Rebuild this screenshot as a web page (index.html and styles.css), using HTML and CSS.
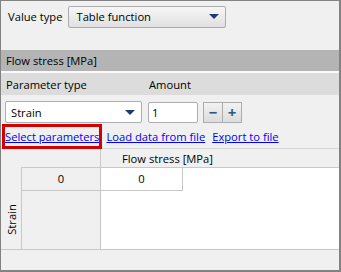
FILE: index.html
```html
<!DOCTYPE html>
<html lang="en">
<head>
    <meta charset="UTF-8">
    <title>Flow stress</title>
    <link rel="stylesheet" href="styles.css">
</head>
<body>
<div class="frame">
    <div class="top">
        <span class="lbl">Value type</span>
        <div class="combo combo-btn">
            <span>Table function</span>
            <span class="arrow"></span>
        </div>
    </div>

    <div class="section">Flow stress [MPa]</div>

    <div class="head-row">
        <span class="c1">Parameter type</span>
        <span class="c2">Amount</span>
    </div>

    <div class="ctrl-row">
        <div class="combo combo-white">
            <span>Strain</span>
            <span class="arrow"></span>
        </div>
        <div class="num">1</div>
        <div class="spin">
            <span class="sb">&minus;</span><span class="sb">+</span>
        </div>
    </div>

    <div class="links">
        <a href="#" class="link marked">Select parameters</a>
        <a href="#" class="link">Load data from file</a>
        <a href="#" class="link">Export to file</a>
    </div>

    <div class="table">
        <div class="corner"></div>
        <div class="colhead"><span>Flow stress [MPa]</span></div>
        <div class="strip"><span class="vtext">Strain</span></div>
        <div class="rowhead">0</div>
        <div class="cell">0</div>
        <div class="rest-top"></div>
        <div class="rowhead-empty"></div>
        <div class="data"></div>
    </div>
</div>
</body>
</html>
```

FILE: styles.css
```css
body {
    margin: 0;
    font-family: "Open Sans", "Noto Sans", sans-serif;
    font-size: 11.2px;
    color: #000;
}
.frame {
    width: 341px;
    height: 272px;
    box-sizing: border-box;
    border: 1px solid #828282;
    border-right-width: 2px;
    border-bottom-width: 2px;
    background: #f0f0f0;
    overflow: hidden;
}
.top {
    display: flex;
    align-items: center;
    gap: 6px;
    padding: 4px 0 0 7px;
    height: 45px;
}
.top .lbl {
    margin-top: -22px;
}
.combo {
    display: flex;
    align-items: center;
    justify-content: space-between;
    box-sizing: border-box;
    border: 1px solid #acacac;
    border-radius: 2px;
    padding: 0 6px 0 5px;
    height: 22px;
}
.top .combo {
    width: 158px;
    margin-top: -22px;
    padding-left: 7px;
}
.combo-btn {
    background: linear-gradient(#f6f6f6, #e0e0e0);
}
.combo-white {
    background: #fff;
    border-color: #abadb3;
    width: 137px;
}
.arrow {
    width: 0;
    height: 0;
    border-left: 5px solid transparent;
    border-right: 5px solid transparent;
    border-top: 5px solid #1e3a6e;
}
.section {
    height: 21px;
    line-height: 21px;
    background: #b4b4b4;
    padding-left: 5px;
    border-bottom: 2px solid #fafafa;
}
.head-row {
    display: flex;
    height: 22px;
    align-items: center;
    background: #dcdcdc;
}
.head-row .c1 {
    width: 143px;
    padding-left: 5px;
}
.ctrl-row {
    display: flex;
    align-items: center;
    gap: 6px;
    padding: 6px 0 0 4px;
}
.num {
    box-sizing: border-box;
    width: 50px;
    height: 21px;
    line-height: 19px;
    padding-left: 3px;
    background: #fff;
    border: 1px solid #abadb3;
    border-radius: 2px;
}
.spin {
    display: flex;
    margin-left: -1px;
}
.sb {
    box-sizing: border-box;
    width: 20px;
    height: 21px;
    line-height: 18px;
    text-align: center;
    font-weight: bold;
    font-size: 15px;
    color: #2c5a78;
    border: 1px solid #acacac;
    background: linear-gradient(#f2f2f2, #dcdcdc);
}
.sb + .sb {
    margin-left: -1px;
}
.links {
    display: flex;
    gap: 7px;
    padding: 2px 0 0 4px;
    height: 23px;
    align-items: center;
    border-bottom: 1px solid #d6d6d6;
}
.link {
    color: #0000ff;
    text-decoration: underline;
}
.marked {
    outline: 3px solid #d40000;
    outline-offset: 0;
    padding: 2px 0;
}
.table {
    display: grid;
    grid-template-columns: 20px 80px 82px 1fr;
    grid-template-rows: 19px 23px 1fr;
    height: 100px;
    border-bottom: 1px solid #c8c8c8;
}
.corner {
    grid-column: 1 / 3;
    border-right: 1px solid #c8c8c8;
}
.colhead {
    grid-column: 3 / 5;
    border-bottom: 1px solid #c8c8c8;
    padding-left: 21px;
    line-height: 19px;
}
.strip {
    grid-row: 2 / 4;
    display: flex;
    align-items: center;
    justify-content: center;
    padding-top: 22px;
}
.vtext {
    transform: rotate(-90deg);
    white-space: nowrap;
}
.rowhead {
    border: 1px solid #c8c8c8;
    margin-top: -1px;
    text-align: center;
    line-height: 22px;
}
.cell {
    background: #fff;
    border-right: 1px solid #c8c8c8;
    border-bottom: 1px solid #c8c8c8;
    text-align: center;
    line-height: 22px;
}
.rest-top {
    background: #fff;
}
.rowhead-empty {
    border-left: 1px solid #c8c8c8;
    border-right: 1px solid #c8c8c8;
}
.data {
    grid-column: 3 / 5;
    background: #fff;
}
```
